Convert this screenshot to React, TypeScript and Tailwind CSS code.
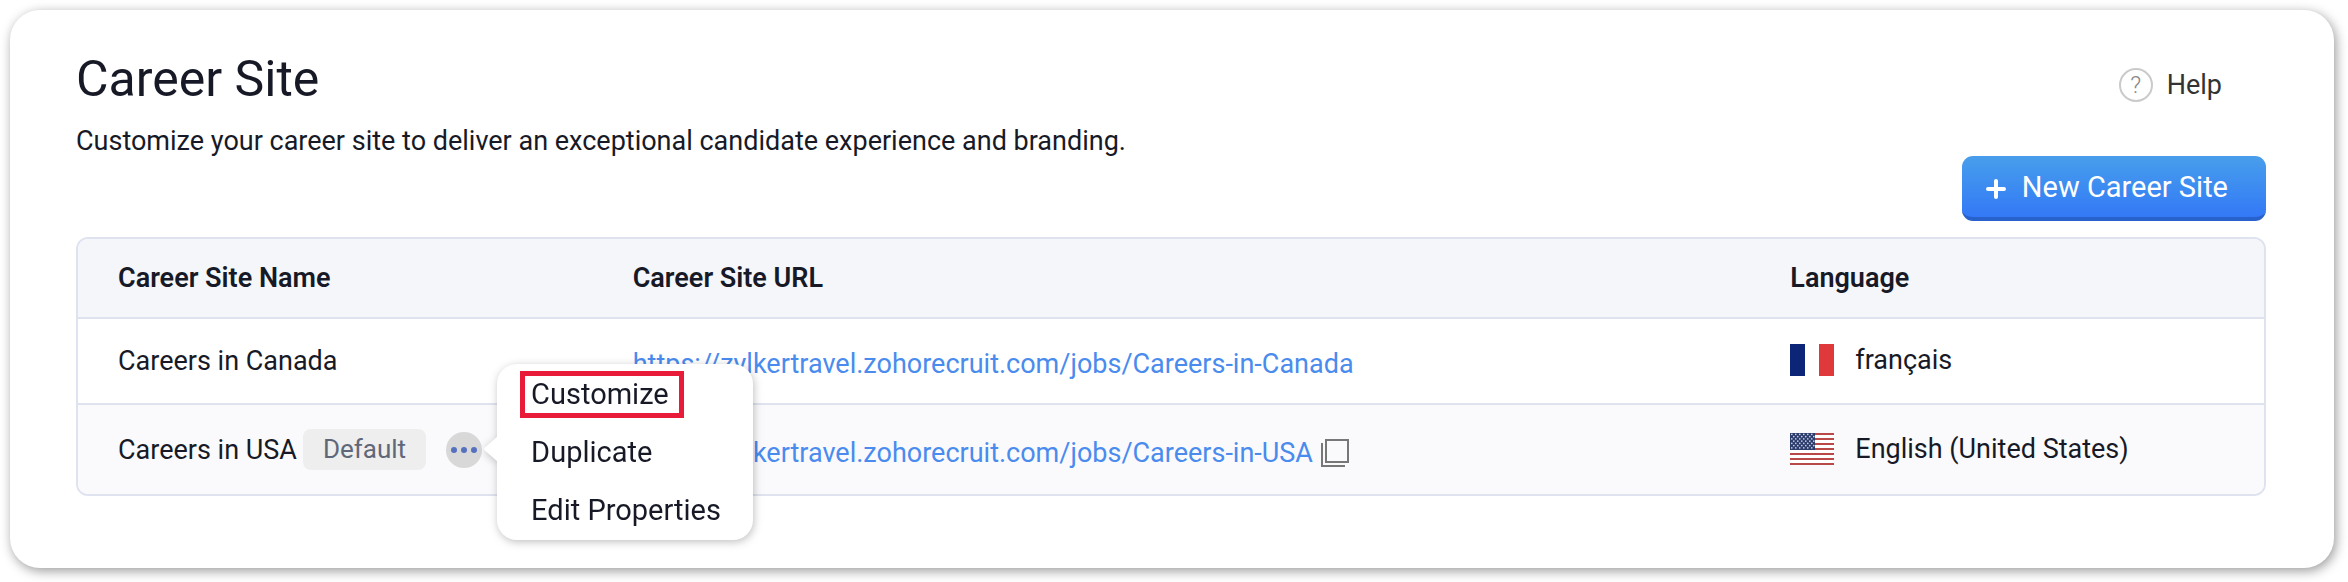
import type { ReactNode } from "react";

interface CareerSite {
  name: string;
  url: string;
  language: string;
  flag: ReactNode;
  isDefault: boolean;
}

function FranceFlag() {
  return (
    <svg width="44" height="32" viewBox="0 0 44 32" aria-hidden="true">
      <rect width="15" height="32" fill="#0c2577" />
      <rect x="15" width="14" height="32" fill="#fff" />
      <rect x="29" width="15" height="32" fill="#e0393b" />
    </svg>
  );
}

function UsaFlag() {
  const stars: ReactNode[] = [];
  for (let row = 0; row < 7; row++) {
    for (let col = 0; col < 6; col++) {
      const cx = 1.8 + col * 4 + (row % 2) * 2;
      stars.push(<circle key={`${row}-${col}`} cx={cx} cy={1.4 + row * 2.25} r="0.8" />);
    }
  }

  return (
    <svg width="44" height="32" viewBox="0 0 44 32" aria-hidden="true">
      <rect width="44" height="32" fill="#fff" />
      {[0, 5, 10, 15, 20, 25, 30].map((y) => (
        <rect key={y} y={y} width="44" height="2" fill="#b94848" />
      ))}
      <rect width="25" height="17" fill="#2c3c6c" />
      <g fill="#d5d9e6">{stars}</g>
    </svg>
  );
}

const sites: CareerSite[] = [
  {
    name: "Careers in Canada",
    url: "https://zylkertravel.zohorecruit.com/jobs/Careers-in-Canada",
    language: "français",
    flag: <FranceFlag />,
    isDefault: false,
  },
  {
    name: "Careers in USA",
    url: "https://zylkertravel.zohorecruit.com/jobs/Careers-in-USA",
    language: "English (United States)",
    flag: <UsaFlag />,
    isDefault: true,
  },
];

function ActionMenu() {
  return (
    <div
      role="menu"
      className="absolute -top-[68px] left-full z-10 ml-[15px] w-64 rounded-[20px] bg-white pt-0.5 text-[29px] leading-[37px] drop-shadow-[1px_2px_4px_rgba(0,0,0,0.25)]"
    >
      <svg className="absolute top-[72px] -left-[13px]" width="14" height="26" viewBox="0 0 14 26" aria-hidden="true">
        <path d="M14 0v26L1 14.5q-1.6-1.5 0-3z" fill="#fff" />
      </svg>
      <button role="menuitem" className="flex h-[58px] w-full items-center pl-[23px]">
        <span className="border-[5px] border-[#e81c38] pr-[10px] pl-[6px]">Customize</span>
      </button>
      <button role="menuitem" className="flex h-[58px] w-full items-center pl-[34px]">
        Duplicate
      </button>
      <button role="menuitem" className="flex h-[58px] w-full items-center pl-[34px]">
        Edit Properties
      </button>
    </div>
  );
}

function SiteRow({ site }: { site: CareerSite }) {
  return (
    <tr className={site.isDefault ? "h-[89px] bg-[#fafafc]" : "h-[86px]"}>
      <td className={site.isDefault ? "rounded-bl-[10px] pl-10" : "border-b-2 border-[#dfe3ef] pl-10"}>
        <div className="flex items-center whitespace-nowrap">
          <span>{site.name}</span>
          {site.isDefault && (
            <>
              <span className="ml-1.5 rounded-lg bg-[#eeeeee] px-5 text-[26px] leading-[41px] text-[#5f6778]">Default</span>
              <div className="relative ml-5 h-9">
                <button
                  aria-label="More actions"
                  className="flex size-9 items-center justify-center rounded-full bg-[#d8d8d8]"
                >
                  <svg width="26" height="6" viewBox="0 0 26 6" fill="#5570bf" aria-hidden="true">
                    <circle cx="3" cy="3" r="3" />
                    <circle cx="13" cy="3" r="3" />
                    <circle cx="23" cy="3" r="3" />
                  </svg>
                </button>
                <ActionMenu />
              </div>
            </>
          )}
        </div>
      </td>
      <td className={site.isDefault ? "pt-1.5 pl-[41px]" : "border-b-2 border-[#dfe3ef] pt-1.5 pl-[41px]"}>
        <div className="flex items-center gap-2">
          <a href={site.url} className="text-[#4a8bee]">
            {site.url}
          </a>
          {site.isDefault && (
            <button aria-label="Copy URL">
              <svg width="28" height="28" viewBox="0 0 28 28" fill="none" stroke="#777" strokeWidth="2" aria-hidden="true">
                <path d="M5 1h22v22H5z" />
                <path d="M1 4v23h23" />
              </svg>
            </button>
          )}
        </div>
      </td>
      <td className={site.isDefault ? "rounded-br-[10px] pb-0.5 pl-10" : "border-b-2 border-[#dfe3ef] pb-0.5 pl-10"}>
        <div className="flex items-center gap-[21px]">
          {site.flag}
          <span>{site.language}</span>
        </div>
      </td>
    </tr>
  );
}

export default function App() {
  return (
    <div className="bg-white pt-2.5 pr-3.5 pb-3.5 pl-2.5 font-[Roboto,sans-serif] text-[27px] leading-8 text-[#171a26]">
      <main className="rounded-[30px] bg-white pt-[39px] pr-[68px] pb-[72px] pl-[66px] shadow-[2px_3px_12px_rgba(0,0,0,0.4)]">
        <header className="flex justify-between">
          <div>
            <h1 className="text-[50px] leading-[60px]">Career Site</h1>
            <p className="mt-3 leading-10">
              Customize your career site to deliver an exceptional candidate experience and branding.
            </p>
          </div>
          <div className="flex flex-col items-end pt-[19px]">
            <a href="#help" className="mr-11 flex items-center gap-3.5 text-[#333]">
              <span className="flex size-[34px] items-center justify-center rounded-full border-2 border-[#cacaca] text-2xl font-light text-[#888]">
                ?
              </span>
              Help
            </a>
            <button className="mt-[54px] flex h-[65px] items-center gap-4 rounded-[11px] border-b-4 border-[#2860cc] bg-linear-to-b from-[#489eeb] to-[#3478f6] pr-[38px] pl-6 text-[29px] text-white">
              <svg className="mt-1" width="20" height="20" viewBox="0 0 20 20" stroke="#fff" strokeWidth="4" strokeLinecap="round" aria-hidden="true">
                <path d="M10 2v16M2 10h16" />
              </svg>
              New Career Site
            </button>
          </div>
        </header>

        <div className="mt-4 rounded-xl border-2 border-[#dfe3ef]">
          <table className="w-full table-fixed border-separate border-spacing-0 text-left">
            <colgroup>
              <col className="w-[23.5%]" />
              <col className="w-[53%]" />
              <col />
            </colgroup>
            <thead>
              <tr className="h-20 bg-[#f5f6fa]">
                <th className="rounded-tl-[10px] border-b-2 border-[#dfe3ef] pl-10 font-semibold">Career Site Name</th>
                <th className="border-b-2 border-[#dfe3ef] pl-[41px] font-semibold">Career Site URL</th>
                <th className="rounded-tr-[10px] border-b-2 border-[#dfe3ef] pl-10 font-semibold">Language</th>
              </tr>
            </thead>
            <tbody>
              {sites.map((site) => (
                <SiteRow key={site.url} site={site} />
              ))}
            </tbody>
          </table>
        </div>
      </main>
    </div>
  );
}
